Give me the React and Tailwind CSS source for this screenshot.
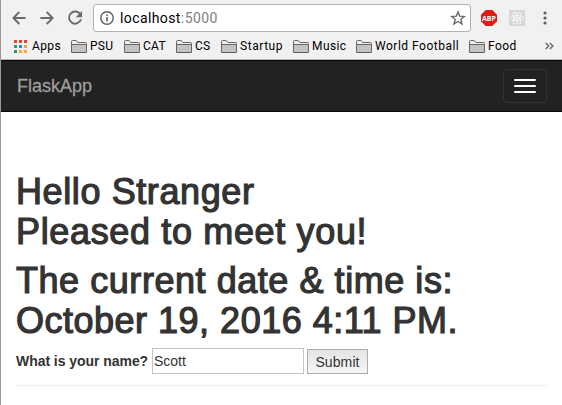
import React from 'react';

const bookmarks = [
  { label: 'PSU', box: 'w-[53px]', text: 'tracking-[0.3px]' },
  { label: 'CAT', box: 'w-[52px]', text: 'tracking-[0.3px]' },
  { label: 'CS', box: 'w-[45px]', text: 'tracking-[0.2px]' },
  { label: 'Startup', box: 'w-[72px]', text: 'tracking-[0.55px]' },
  { label: 'Music', box: 'w-[63px]', text: 'tracking-[0.4px]' },
  { label: 'World Football', box: 'w-[113px]', text: 'tracking-[0.5px]' },
  { label: 'Food', box: 'w-[60px]', text: 'tracking-[0.4px]' },
];

function Arrow({ flip }) {
  return (
    <svg width="14" height="14" viewBox="0 0 14 14" className={flip ? '-scale-x-100' : ''} fill="none" stroke="#6b6b6b" strokeWidth="1.9">
      <path d="M13.6 7H1.6M7.3 1L1.4 7l5.9 6" />
    </svg>
  );
}

function Folder() {
  return (
    <svg width="16" height="14" viewBox="0 0 16 14" className="shrink-0">
      <path d="M.5 13V2.500Q.5 1.500 1.500 1.500h3.700l1.600 2h7.700q1 0 1 1V13z" fill="#ededed" stroke="#676767" />
      <path d="M1 6h14v7H1z" fill="#c3c3c3" />
      <path d="M1 5.500h14" stroke="#676767" />
      <path d="M.5 13.500h15" stroke="#5c5c5c" />
    </svg>
  );
}

function AppsGrid() {
  const colors = ['#ee4035', '#ee4035', '#ee4035', '#1fa463', '#1a8cff', '#f6a835', '#1fa463', '#f6a835', '#f6a835'];
  return (
    <svg width="13" height="13" viewBox="0 0 13 13" className="mr-[1px] shrink-0">
      {colors.map((c, i) => (
        <rect key={i} x={(i % 3) * 5} y={Math.floor(i / 3) * 5} width="3" height="3" fill={c} />
      ))}
    </svg>
  );
}

function Toolbar() {
  return (
    <div className="flex h-[35px] items-center pl-[11px] pt-[1px]">
      <Arrow />
      <div className="ml-[14px] flex"><Arrow flip /></div>
      <svg width="16" height="16" viewBox="0 0 16 16" className="ml-[13px]" fill="none">
        <path d="M13.300 4.300A6.100 6.100 0 1 0 14 9.300" stroke="#6b6b6b" strokeWidth="1.900" />
        <path d="M15 1v6.300H8.700z" fill="#6b6b6b" />
      </svg>
      <div className="ml-[10px] flex h-[28px] w-[378px] items-center rounded-[3px] border border-[#b2b2b2] bg-white pl-[6px] pr-[4px]">
        <svg width="14" height="14" viewBox="0 0 14 14" fill="none">
          <circle cx="7" cy="7" r="6.200" stroke="#5f5f5f" strokeWidth="1.400" />
          <path d="M7 6v4.500M7 3.400v1.600" stroke="#5f5f5f" strokeWidth="1.600" />
        </svg>
        <span className="ml-[6px] font-[Roboto,sans-serif] text-[14px] leading-[18px] tracking-[0.4px] text-black">localhost<span className="text-[#808080]">:5000</span></span>
        <svg width="16" height="16" viewBox="0 0 16 16" className="ml-auto" fill="none">
          <path d="M8 1.900l1.700 4.300 4.700.3-3.600 3 1.200 4.500L8 11.500 4 14l1.200-4.500-3.600-3 4.700-.3z" stroke="#686868" strokeWidth="1.400" />
        </svg>
      </div>
      <svg width="16" height="16" viewBox="0 0 16 16" className="ml-[10px]">
        <path d="M4.700 0h6.600L16 4.700v6.600L11.300 16H4.700L0 11.300V4.700z" fill="#df1b16" />
        <text x="8" y="10.700" textAnchor="middle" fontFamily="Open Sans, sans-serif" fontSize="7.500" fontWeight="700" fill="#fff" textLength="14" lengthAdjust="spacingAndGlyphs">ABP</text>
      </svg>
      <svg width="16" height="16" viewBox="0 0 16 16" className="ml-[12px]" fill="none">
        <path d="M0 0h16v16H0z" fill="#d6d6d6" />
        <g stroke="#fafafa" strokeWidth="0.800">
          <ellipse cx="8" cy="8" rx="6.700" ry="2.600" />
          <ellipse cx="8" cy="8" rx="6.700" ry="2.600" transform="rotate(60 8 8)" />
          <ellipse cx="8" cy="8" rx="6.700" ry="2.600" transform="rotate(120 8 8)" />
        </g>
        <circle cx="8" cy="8" r="1.400" fill="#fafafa" />
      </svg>
      <svg width="4" height="14" viewBox="0 0 4 14" className="ml-[18px]" fill="#5f5f5f">
        <circle cx="2" cy="2" r="1.600" /><circle cx="2" cy="7" r="1.600" /><circle cx="2" cy="12" r="1.600" />
      </svg>
    </div>
  );
}

function BookmarksBar() {
  return (
    <div className="flex h-[22px] items-center pl-[13px] font-[Roboto,sans-serif] text-[12px] leading-[14px] text-black">
      <AppsGrid />
      <span className="ml-[4px] w-[39px] tracking-[0.4px]">Apps</span>
      {bookmarks.map((b) => (
        <div key={b.label} className={`flex shrink-0 items-center gap-[3px] ${b.box}`}>
          <Folder />
          <span className={`whitespace-nowrap ${b.text}`}>{b.label}</span>
        </div>
      ))}
      <svg width="9" height="8" viewBox="0 0 9 8" className="ml-[16px] shrink-0" fill="none" stroke="#6e6e6e" strokeWidth="1.500">
        <path d="M.7 1l3 3-3 3M4.900 1l3 3-3 3" />
      </svg>
    </div>
  );
}

export default function App() {
  return (
    <div className="h-[405px] w-[562px] overflow-hidden border-l border-[#999] bg-white font-['Liberation_Sans',Arial,sans-serif] text-[#333]">
      <header className="h-[60px] border-b border-[#b2b2b2] bg-[#f1f1f1]">
        <Toolbar />
        <BookmarksBar />
      </header>
      <nav className="flex h-[52px] items-center justify-between border-y border-[#080808] bg-[#222] pl-[16px] pr-[15px]">
        <span className="text-[18px] leading-[20px] text-[#9d9d9d] [-webkit-text-stroke:0.3px_#9d9d9d]">FlaskApp</span>
        <button className="flex h-[34px] w-[44px] flex-col items-center justify-center gap-[4px] rounded-[4px] border border-[#333]">
          <span className="h-[2px] w-[22px] rounded-[1px] bg-white" />
          <span className="h-[2px] w-[22px] rounded-[1px] bg-white" />
          <span className="h-[2px] w-[22px] rounded-[1px] bg-white" />
        </button>
      </nav>
      <main className="pl-[15px] pr-[14px] pt-[60px]">
        <h1 className="whitespace-nowrap text-[36px] leading-[39.6px] [-webkit-text-stroke:1.2px_#333]">
          <span className="block tracking-[0.6px]">Hello Stranger</span>
          <span className="block tracking-[0.65px]">Pleased to meet you!</span>
        </h1>
        <h1 className="mt-[10px] whitespace-nowrap text-[36px] leading-[39.6px] [-webkit-text-stroke:1.2px_#333]">
          <span className="block tracking-[0.55px]">The current date &amp; time is:</span>
          <span className="block tracking-[0.5px]">October 19, 2016 4:11 PM.</span>
        </h1>
        <form className="mt-[8px] flex h-[26px] items-center text-[14px] leading-[20px]">
          <label className="w-[136px] whitespace-nowrap font-bold tracking-[-0.05px]">What is your name?</label>
          <input className="h-[26px] w-[152px] border border-[#c4c4c4] bg-white px-[1px] text-[14px]" defaultValue="Scott" />
          <button type="button" className="ml-[3px] mt-[1px] h-[25px] w-[61px] border border-[#adadad] bg-linear-to-b from-[#e4e4e4] to-[#f6f6f6] text-[14px] leading-[20px] tracking-[0.1px]">Submit</button>
        </form>
        <hr className="mt-[11px] border-[#eee]" />
      </main>
    </div>
  );
}
